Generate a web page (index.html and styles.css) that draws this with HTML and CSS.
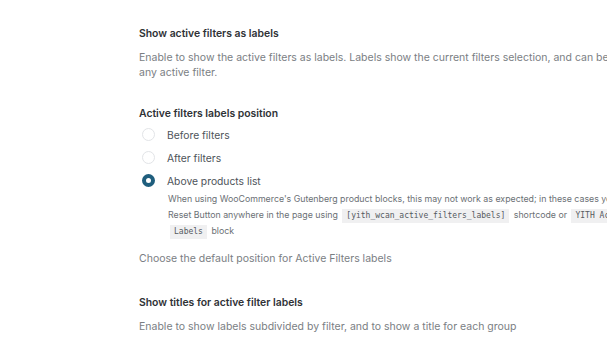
FILE: index.html
```html
<!DOCTYPE html>
<html>
<head>
    <meta charset="UTF-8">
    <title>Active filters labels</title>
    <link rel="stylesheet" href="styles.css">
</head>
<body>
    <div class="options">
        <div class="option">
            <div class="option-title">Show active filters as labels</div>
            <div class="option-desc">Enable to show the active filters as labels. Labels show the current filters selection, and can be used to remove<br>any active filter.</div>
        </div>

        <div class="option with-radio">
            <div class="option-title tight">Active filters labels position</div>
            <div class="radio-list">
                <label class="radio-row">
                    <span class="radio"></span>
                    <span class="radio-label">Before filters</span>
                </label>
                <label class="radio-row">
                    <span class="radio"></span>
                    <span class="radio-label">After filters</span>
                </label>
                <label class="radio-row">
                    <span class="radio checked"></span>
                    <span class="radio-label">Above products list</span>
                </label>
                <div class="radio-help">
                    When using WooCommerce's Gutenberg product blocks, this may not work as expected; in these cases you can place the<br>
                    Reset Button anywhere in the page using <code>[yith_wcan_active_filters_labels]</code> shortcode or <code>YITH Active Filters</code><br>
                    <code>Labels</code> block
                </div>
            </div>
            <div class="option-desc">Choose the default position for Active Filters labels</div>
        </div>

        <div class="option">
            <div class="option-title">Show titles for active filter labels</div>
            <div class="option-desc">Enable to show labels subdivided by filter, and to show a title for each group</div>
        </div>
    </div>
</body>
</html>
```

FILE: styles.css
```css
body {
    margin: 0;
    padding: 0;
    background: #ffffff;
    font-family: Inter, "Noto Sans", sans-serif;
    color: #3c434a;
    overflow: hidden;
}
.options {
    padding: 27px 0 0 139px;
    width: 700px;
}
.option {
    margin-bottom: 27px;
}
.option.with-radio {
    margin-bottom: 30px;
}
.option-title {
    font-size: 10.4px;
    font-weight: 600;
    line-height: 14px;
    color: #2f3236;
    margin-bottom: 9px;
}
.option-title.tight {
    margin-bottom: 2px;
}
.option-desc {
    font-size: 10.5px;
    line-height: 15px;
    color: #7a7e83;
    white-space: nowrap;
}
.radio-list {
    margin-bottom: 12px;
}
.radio-row {
    display: flex;
    align-items: center;
    height: 23px;
}
.radio {
    width: 11px;
    height: 11px;
    border: 1px solid #e2e4e7;
    border-radius: 50%;
    margin-left: 3px;
    margin-right: 12px;
    box-sizing: content-box;
}
.radio.checked {
    width: 5px;
    height: 5px;
    border: 4px solid #1f5e7d;
    background: #ffffff;
}
.radio-label {
    font-size: 10.3px;
    color: #4e545a;
}
.radio-help {
    margin-top: -1px;
    margin-left: 29px;
    font-size: 8.8px;
    line-height: 16px;
    color: #6b7075;
    white-space: nowrap;
}
code {
    display: inline-block;
    font-family: "DejaVu Sans Mono", monospace;
    font-size: 8px;
    line-height: 14px;
    background: #f0f0f1;
    color: #555a5f;
    padding: 0 4px;
    margin: 0 2px;
}
```
